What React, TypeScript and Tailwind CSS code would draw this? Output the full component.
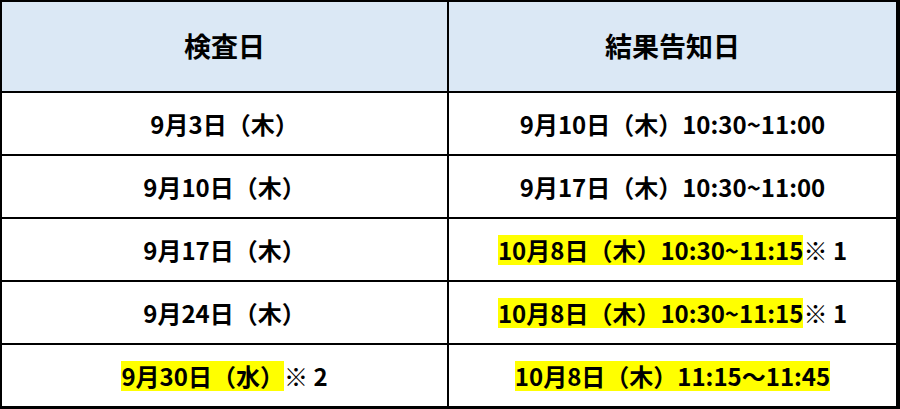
import React from 'react';

type Cell = {
  mark?: string;
  plain?: string;
  note?: string;
};

const rows: [Cell, Cell][] = [
  [{ plain: '9月3日（木）' }, { plain: '9月10日（木）10:30~11:00' }],
  [{ plain: '9月10日（木）' }, { plain: '9月17日（木）10:30~11:00' }],
  [{ plain: '9月17日（木）' }, { mark: '10月8日（木）10:30~11:15', note: '1' }],
  [{ plain: '9月24日（木）' }, { mark: '10月8日（木）10:30~11:15', note: '1' }],
  [{ mark: '9月30日（水）', note: '2' }, { mark: '10月8日（木）11:15～11:45' }],
];

function CellText({ cell }: { cell: Cell }) {
  return (
    <span className="whitespace-pre text-[24px] font-bold leading-[30px] text-black">
      {cell.plain}
      {cell.mark && <span className="inline-block h-[30px] bg-[#ffff00]">{cell.mark}</span>}
      {cell.note && (
        <>
          <span className="font-normal">※</span>
          {' '}
          {cell.note}
        </>
      )}
    </span>
  );
}

export default function App() {
  return (
    <div
      className="flex h-[409px] w-[900px] flex-col border-t-2 border-r-4 border-b-[3px] border-l-2 border-black bg-white"
      style={{ fontFamily: '"Noto Sans CJK JP", "Noto Sans", sans-serif' }}
    >
      <div className="grid h-[91px] shrink-0 grid-cols-2 border-b-2 border-black bg-[#dbe8f5]">
        <div className="flex items-center justify-center border-r-2 border-black text-[27px] font-bold text-black">
          検査日
        </div>
        <div className="flex items-center justify-center text-[27px] font-bold text-black">
          結果告知日
        </div>
      </div>
      {rows.map((row, i) => (
        <div
          key={i}
          className={
            i < rows.length - 1
              ? 'grid h-[63px] shrink-0 grid-cols-2 border-b-2 border-black'
              : 'grid flex-1 grid-cols-2'
          }
        >
          <div className="flex items-center justify-center border-r-2 border-black">
            <CellText cell={row[0]} />
          </div>
          <div className="flex items-center justify-center">
            <CellText cell={row[1]} />
          </div>
        </div>
      ))}
    </div>
  );
}
